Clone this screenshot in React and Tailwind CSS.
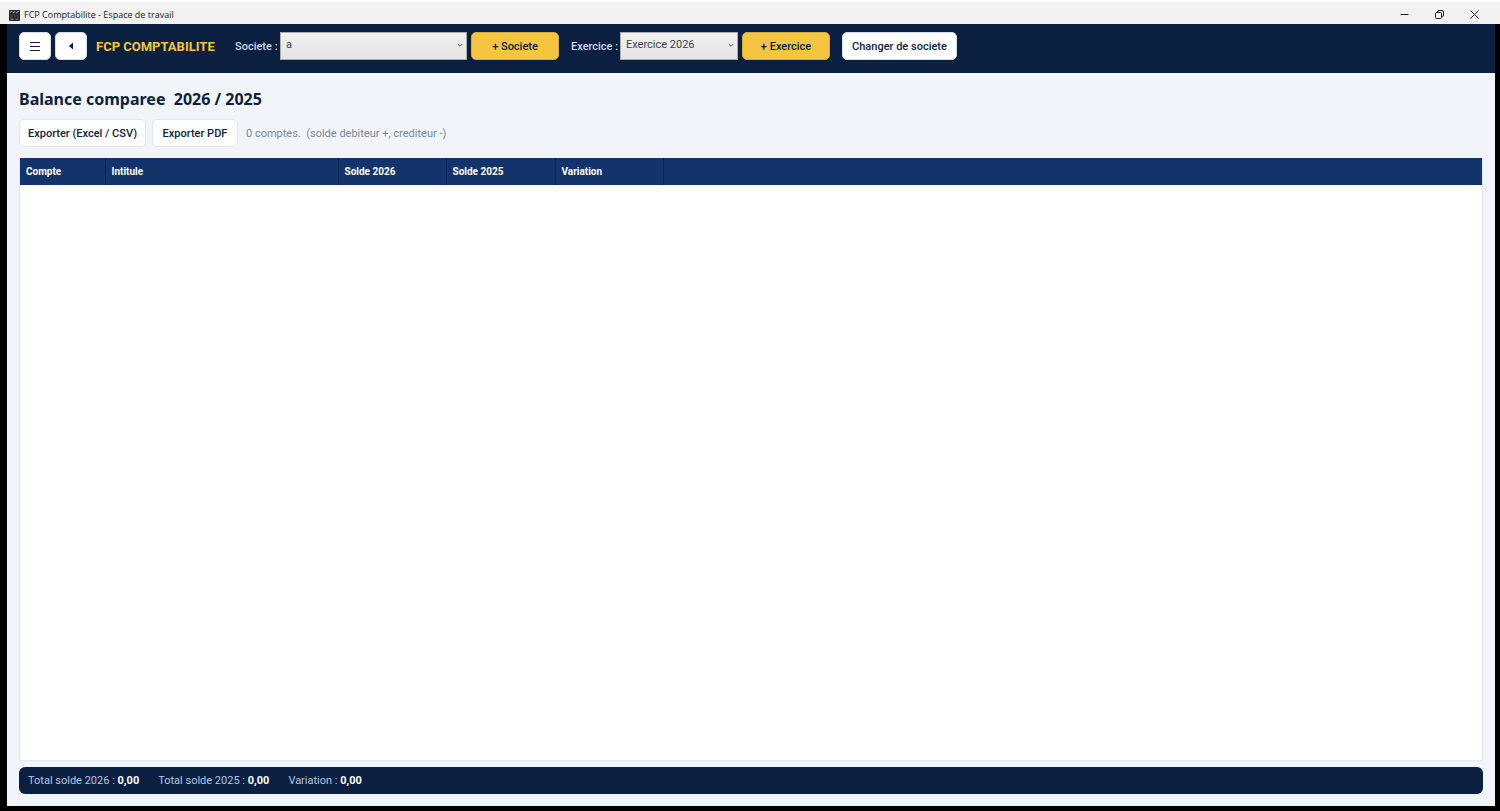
import React, { useState } from "react";

const columns = [
  { label: "Compte", width: "w-[85px]" },
  { label: "Intitule", width: "w-[233px]" },
  { label: "Solde 2026", width: "w-[108px]" },
  { label: "Solde 2025", width: "w-[109px]" },
  { label: "Variation", width: "w-[108px]" },
];

const totals = [
  { label: "Total solde 2026 :", value: "0,00" },
  { label: "Total solde 2025 :", value: "0,00" },
  { label: "Variation :", value: "0,00" },
];

const AppIcon = () => (
  <svg className="w-[11px] h-[11px]" viewBox="0 0 11 11" aria-hidden="true">
    <rect width="11" height="11" rx="1" fill="#20242c" />
    <path d="M1 2.5l2-1.2M4 3l2.4-1.6M7.2 3l2.4-1.6" stroke="#a3aab8" strokeWidth="1.1" />
    <path d="M1 5.2h9" stroke="#4a5160" strokeWidth="0.8" />
    <path d="M1.5 7.2h2M5 7.2h1.5M8 7.2h1.5" stroke="#6f7888" strokeWidth="0.8" />
    <path d="M1.5 9.3h3" stroke="#d9a441" strokeWidth="1" />
    <path d="M6.5 9.3h3" stroke="#4d8fc9" strokeWidth="1" />
  </svg>
);

const TitleBar = () => (
  <header className="h-6 shrink-0 flex items-end justify-between bg-[#f2f2f2] border-t-2 border-white pl-[9px] text-[#1b1b1b]">
    <div className="flex items-center gap-1 h-[18px]">
      <AppIcon />
      <span className="text-[9px] leading-[18px] font-['Open_Sans','Noto_Sans',sans-serif]">
        FCP Comptabilite - Espace de travail
      </span>
    </div>
    <div className="flex h-5">
      <button aria-label="Reduire" className="w-[35px] flex items-center justify-center">
        <svg className="w-[9px] h-[9px]" viewBox="0 0 9 9" stroke="currentColor" fill="none">
          <path d="M0.5 4.5h8" />
        </svg>
      </button>
      <button aria-label="Restaurer" className="w-[35px] flex items-center justify-center">
        <svg className="w-[9px] h-[9px]" viewBox="0 0 9 9" stroke="currentColor" fill="none">
          <rect x="0.5" y="2.5" width="6" height="6" rx="1" />
          <path d="M2.5 2.3V2a1.5 1.5 0 0 1 1.5-1.5h3A1.5 1.5 0 0 1 8.5 2v3A1.5 1.5 0 0 1 7 6.5h-.3" />
        </svg>
      </button>
      <button aria-label="Fermer" className="w-[35px] mr-2 flex items-center justify-center">
        <svg className="w-[9px] h-[9px]" viewBox="0 0 9 9" stroke="currentColor" fill="none">
          <path d="M0.5 0.5l8 8M8.5 0.5l-8 8" />
        </svg>
      </button>
    </div>
  </header>
);

const Picker = ({ id, label, options, labelWidth, width }) => {
  const [value, setValue] = useState(options[0]);

  return (
    <div className="flex items-center">
      <label htmlFor={id} className={`${labelWidth} pt-px font-medium text-[#c9d8f0] whitespace-nowrap`}>
        {label}
      </label>
      <div className={`relative h-7 ${width}`}>
        <select
          id={id}
          value={value}
          onChange={(e) => setValue(e.target.value)}
          className="block appearance-none w-full h-full pl-[5px] pb-[3px] border border-[#acacac] bg-linear-to-b from-[#f0f0f0] to-[#e5e5e5] text-[#3a4250]"
        >
          {options.map((item) => (
            <option key={item}>{item}</option>
          ))}
        </select>
        <svg className="absolute right-1 top-[11px] w-[6px] h-[5px] pointer-events-none" viewBox="0 0 6 5" fill="none" stroke="#606060">
          <path d="M0.7 1l2.3 2.3L5.3 1" />
        </svg>
      </div>
    </div>
  );
};

const Toolbar = () => (
  <nav className="h-[49px] shrink-0 flex items-start bg-[#0b1f40] pt-2 pl-3 text-[#0b1f40]">
    <button aria-label="Menu" className="w-8 h-7 rounded-[5px] border border-[#d5deeb] bg-white flex items-center justify-center">
      <svg className="w-[10px] h-[10px]" viewBox="0 0 10 10" stroke="currentColor" fill="none">
        <path d="M0 1.5h10M0 5.5h10M0 9.5h10" />
      </svg>
    </button>
    <button aria-label="Retour" className="w-8 h-7 ml-1 rounded-[5px] border border-[#d5deeb] bg-white flex items-center justify-center">
      <svg className="w-[4px] h-[8px]" viewBox="0 0 4 8" fill="currentColor">
        <path d="M4 0.5v7L0 4z" />
      </svg>
    </button>
    <span className="leading-7 pt-px ml-[9px] w-[121px] text-[13px] font-bold text-[#f5c542] whitespace-nowrap">
      FCP COMPTABILITE
    </span>
    <div className="flex items-center gap-1 ml-[18px]">
      <Picker id="societe" label="Societe :" options={["a"]} labelWidth="w-[45px]" width="w-[187px]" />
      <button className="w-[88px] h-7 pt-px rounded-[5px] border border-[#d9ac33] bg-[#f5c542] font-medium">
        + Societe
      </button>
    </div>
    <div className="flex items-center gap-1 ml-3">
      <Picker id="exercice" label="Exercice :" options={["Exercice 2026"]} labelWidth="w-[49px]" width="w-[118px]" />
      <button className="w-[88px] h-7 pt-px rounded-[5px] border border-[#d9ac33] bg-[#f5c542] font-medium">
        + Exercice
      </button>
    </div>
    <button className="w-[115px] h-7 pt-px ml-3 rounded-[5px] border border-[#d5deeb] bg-white font-medium whitespace-nowrap">
      Changer de societe
    </button>
  </nav>
);

const App = () => {
  return (
    <div className="min-h-screen flex flex-col bg-black font-[Roboto,'Noto_Sans',sans-serif] text-[11px] leading-4">
      <TitleBar />
      <div className="flex-1 flex flex-col ml-[7px] mr-[5px] mb-[5px] bg-[#f1f5fa]">
        <Toolbar />
        <main className="flex-1 flex flex-col px-3 pt-3 pb-3">
          <h1 className="h-7 leading-7 text-[16px] font-bold font-['Noto_Sans',sans-serif] text-[#0b1f40] whitespace-pre">
            Balance comparee  2026 / 2025
          </h1>

          <div className="flex items-center mt-[6px]">
            <button className="w-[127px] h-7 pt-px rounded-[5px] border border-[#e1e8f1] bg-white font-medium text-[#0b1f40] whitespace-nowrap">
              Exporter (Excel / CSV)
            </button>
            <button className="w-[86px] h-7 pt-px ml-[6px] rounded-[5px] border border-[#e1e8f1] bg-white font-medium text-[#0b1f40] whitespace-nowrap">
              Exporter PDF
            </button>
            <p className="pt-px ml-2 text-[#7a8596] whitespace-pre">
              0 comptes.  (solde debiteur +, crediteur -)
            </p>
          </div>

          <div className="flex-1 mt-[11px] border border-t-0 border-[#e1e8f1] bg-white">
            <table className="w-full table-fixed border-collapse">
              <thead>
                <tr className="h-[27px] bg-[#12346b]">
                  {columns.map((col) => (
                    <th
                      key={col.label}
                      className={`${col.width} p-0 pl-[6px] text-left text-[10px] font-bold text-white border-r border-[#0b2450]`}
                    >
                      {col.label}
                    </th>
                  ))}
                  <th className="p-0"></th>
                </tr>
              </thead>
              <tbody></tbody>
            </table>
          </div>

          <footer className="flex items-center gap-[19px] h-[27px] pt-px mt-[6px] px-[9px] rounded-[6px] bg-[#0b1f40] text-[#b4c6e4]">
            {totals.map((item) => (
              <span key={item.label}>
                {item.label} <b className="font-bold text-white">{item.value}</b>
              </span>
            ))}
          </footer>
        </main>
      </div>
    </div>
  );
};

export default App;
